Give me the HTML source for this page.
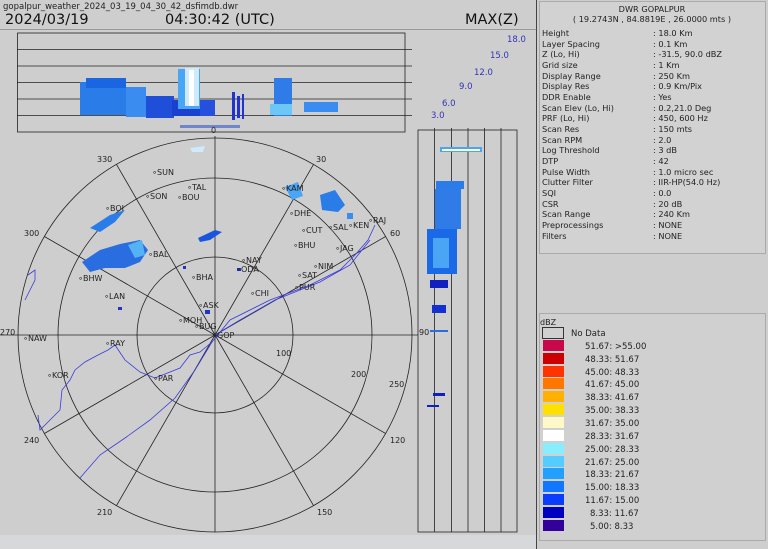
<!DOCTYPE html>
<html><head><style>
body{margin:0;width:768px;height:549px;overflow:hidden;background:#cdcdcd;font-family:"DejaVu Sans","Liberation Sans",sans-serif;}
svg{position:absolute;left:0;top:0}
</style></head><body>
<svg width="768" height="549" viewBox="0 0 768 549" xmlns="http://www.w3.org/2000/svg" font-family="DejaVu Sans, Liberation Sans, sans-serif">
<rect width="768" height="549" fill="#cecece"/>
<rect x="0" y="535" width="536" height="14" fill="#d6d8da"/>
<text x="3" y="9" font-size="8.5" fill="#222">gopalpur_weather_2024_03_19_04_30_42_dsfimdb.dwr</text>
<text x="5" y="24" font-size="14.5" fill="#111">2024/03/19</text>
<text x="165" y="24" font-size="14.5" fill="#111">04:30:42 (UTC)</text>
<text x="465" y="24" font-size="14.5" fill="#111">MAX(Z)</text>
<line x1="0" y1="29.5" x2="536" y2="29.5" stroke="#999"/>
<line x1="536.5" y1="0" x2="536.5" y2="549" stroke="#444"/>
<g stroke="#222" stroke-width="0.8" fill="none">
<rect x="17.5" y="33" width="387.5" height="99"/>
<line x1="17" y1="49.5" x2="412" y2="49.5"/><line x1="17" y1="66" x2="412" y2="66"/><line x1="17" y1="82.5" x2="412" y2="82.5"/><line x1="17" y1="99" x2="412" y2="99"/><line x1="17" y1="115.5" x2="412" y2="115.5"/>
<rect x="418" y="130" width="99" height="402"/>
<line x1="434.5" y1="128" x2="434.5" y2="532"/><line x1="451.5" y1="128" x2="451.5" y2="532"/><line x1="468" y1="128" x2="468" y2="532"/><line x1="484.5" y1="128" x2="484.5" y2="532"/><line x1="501" y1="128" x2="501" y2="532"/>
</g>
<g font-size="8.5" fill="#3333bb">
<text x="507" y="42">18.0</text><text x="490" y="58">15.0</text><text x="474" y="75">12.0</text><text x="459" y="89">9.0</text><text x="442" y="106">6.0</text><text x="431" y="118">3.0</text>
</g>
<g>
<rect x="80" y="82" width="46" height="33" fill="#2a7de8"/><rect x="86" y="78" width="40" height="10" fill="#1a66e0"/>
<rect x="126" y="87" width="20" height="30" fill="#3a8cf0"/><rect x="146" y="96" width="28" height="22" fill="#1f4fd8"/>
<rect x="172" y="100" width="42" height="16" fill="#1a40d0"/>
<rect x="178" y="69" width="22" height="40" fill="#4aa6f5"/><rect x="185" y="68" width="14" height="38" fill="#cfeafc"/><rect x="189" y="70" width="5" height="36" fill="#fff"/>
<rect x="200" y="100" width="15" height="16" fill="#2550dd"/>
<rect x="232" y="92" width="3" height="28" fill="#2233cc"/><rect x="237" y="96" width="3" height="22" fill="#2233cc"/><rect x="242" y="94" width="2" height="25" fill="#2233cc"/>
<rect x="274" y="78" width="18" height="38" fill="#2f7ce8"/><rect x="270" y="104" width="22" height="11" fill="#6cc6f6"/>
<rect x="304" y="102" width="34" height="10" fill="#3a8cf0"/>
<rect x="180" y="125" width="60" height="3" fill="#3355cc" opacity=".6"/>
</g>
<text x="211" y="133" font-size="8" fill="#222">0</text>
<g stroke="#222" stroke-width="0.8" fill="none">
<circle cx="215" cy="335" r="78"/><circle cx="215" cy="335" r="157"/><circle cx="215" cy="335" r="197"/>
<line x1="215" y1="136" x2="215" y2="532"/>
<line x1="0" y1="335" x2="418" y2="335"/>
<line x1="215" y1="335" x2="313.5" y2="164.4"/><line x1="215" y1="335" x2="385.6" y2="236.5"/>
<line x1="215" y1="335" x2="385.6" y2="433.5"/><line x1="215" y1="335" x2="313.5" y2="505.6"/>
<line x1="215" y1="335" x2="116.5" y2="505.6"/><line x1="215" y1="335" x2="44.4" y2="433.5"/>
<line x1="215" y1="335" x2="44.4" y2="236.5"/><line x1="215" y1="335" x2="116.5" y2="164.4"/>
</g>
<g font-size="8" fill="#222">
<text x="97" y="162">330</text><text x="316" y="162">30</text><text x="24" y="236">300</text><text x="390" y="236">60</text>
<text x="0" y="335">270</text><text x="419" y="335">90</text><text x="276" y="356">100</text><text x="351" y="377">200</text><text x="389" y="387">250</text>
<text x="24" y="443">240</text><text x="390" y="443">120</text><text x="97" y="515">210</text><text x="317" y="515">150</text>
</g>
<g stroke="#3b3bdd" stroke-width="0.8" fill="none">
<polyline points="80,478 100,455 125,438 150,420 175,398 195,370 212,342 230,320 270,300 310,285 340,270 355,255 368,240 375,225"/>
<polyline points="212,342 200,352 190,355 180,368 170,372 155,378 140,372 125,360 115,345 108,350 98,355 85,362 75,370 70,380 62,390 60,410 50,420 40,430 38,415"/>
<polyline points="215,335 240,320 275,300 320,282 350,265 370,240"/>
<polyline points="25,300 35,280 35,270 28,275"/>
</g>
<g>
<path d="M90,228 L110,215 125,210 115,222 100,232Z" fill="#2a7de8"/>
<path d="M82,262 L100,250 120,244 140,240 148,250 140,262 125,268 105,268 90,272Z" fill="#2a6de0"/>
<path d="M128,245 L142,240 145,255 135,258Z" fill="#55b3f5"/>
<path d="M198,238 L215,230 222,232 210,240 200,242Z" fill="#1a55e0"/>
<path d="M190,148 L205,146 203,152 192,152Z" fill="#cfeafc"/>
<path d="M285,187 L298,182 303,196 292,200Z" fill="#4aa6f5"/>
<path d="M320,195 L335,190 345,205 338,212 322,210Z" fill="#2a7de8"/>
<rect x="347" y="213" width="6" height="6" fill="#3a8cf0"/>
<rect x="183" y="266" width="3" height="3" fill="#2233cc"/><rect x="205" y="310" width="5" height="4" fill="#2233cc"/><rect x="118" y="307" width="4" height="3" fill="#2233cc"/><rect x="237" y="268" width="4" height="3" fill="#2233cc"/>
</g>
<g>
<rect x="440" y="147" width="42" height="5" fill="#4aa6f5"/><rect x="442" y="149" width="38" height="2" fill="#fffbd0"/>
<rect x="436" y="181" width="28" height="8" fill="#2a7de8"/><rect x="435" y="189" width="26" height="40" fill="#2f7ce8"/>
<rect x="427" y="229" width="30" height="45" fill="#1a6ae8"/><rect x="433" y="238" width="16" height="30" fill="#4aa6f5"/>
<rect x="430" y="280" width="18" height="8" fill="#1020c0"/><rect x="432" y="305" width="14" height="8" fill="#1530d0"/>
<rect x="430" y="330" width="18" height="2" fill="#2a6de0"/><rect x="433" y="393" width="12" height="3" fill="#1020c0"/><rect x="427" y="405" width="12" height="2" fill="#1020c0"/>
</g>
<g font-size="8" fill="#222">
<text x="152" y="175">∘SUN</text><text x="187" y="190">∘TAL</text><text x="145" y="199">∘SON</text><text x="177" y="200">∘BOU</text>
<text x="105" y="211">∘BOI</text><text x="148" y="257">∘BAL</text><text x="78" y="281">∘BHW</text><text x="104" y="299">∘LAN</text>
<text x="191" y="280">∘BHA</text><text x="198" y="308">∘ASK</text><text x="178" y="323">∘MOH</text><text x="194" y="329">∘BUG</text><text x="212" y="338">∘GOP</text>
<text x="241" y="263">∘NAY</text><text x="236" y="272">∘ODA</text><text x="250" y="296">∘CHI</text><text x="281" y="191">∘KAM</text>
<text x="289" y="216">∘DHE</text><text x="301" y="233">∘CUT</text><text x="328" y="230">∘SAL</text><text x="348" y="228">∘KEN</text><text x="368" y="223">∘RAJ</text>
<text x="293" y="248">∘BHU</text><text x="335" y="251">∘JAG</text><text x="313" y="269">∘NIM</text><text x="297" y="278">∘SAT</text><text x="294" y="290">∘PUR</text>
<text x="23" y="341">∘NAW</text><text x="105" y="346">∘RAY</text><text x="47" y="378">∘KOR</text><text x="153" y="381">∘PAR</text>
</g>
<rect x="539.5" y="1.5" width="226" height="252" fill="#d2d2d2" stroke="#aaa"/>
<g font-size="8.2" fill="#222">
<text x="652" y="12" text-anchor="middle">DWR GOPALPUR</text>
<text x="652" y="22" text-anchor="middle">( 19.2743N , 84.8819E , 26.0000 mts )</text>
</g>
<g font-size="8.2" fill="#222">
<text x="542" y="36">Height</text><text x="542" y="47">Layer Spacing</text><text x="542" y="57">Z (Lo, Hi)</text><text x="542" y="68">Grid size</text><text x="542" y="79">Display Range</text><text x="542" y="89">Display Res</text><text x="542" y="100">DDR Enable</text><text x="542" y="111">Scan Elev (Lo, Hi)</text><text x="542" y="121">PRF (Lo, Hi)</text><text x="542" y="132">Scan Res</text><text x="542" y="143">Scan RPM</text><text x="542" y="153">Log Threshold</text><text x="542" y="164">DTP</text><text x="542" y="175">Pulse Width</text><text x="542" y="185">Clutter Filter</text><text x="542" y="196">SQI</text><text x="542" y="207">CSR</text><text x="542" y="217">Scan Range</text><text x="542" y="228">Preprocessings</text><text x="542" y="239">Filters</text>
</g>
<g font-size="8.2" fill="#222">
<text x="653" y="36">:  18.0 Km</text><text x="653" y="47">:  0.1 Km</text><text x="653" y="57">:  -31.5, 90.0 dBZ</text><text x="653" y="68">:  1 Km</text><text x="653" y="79">:  250 Km</text><text x="653" y="89">:  0.9 Km/Pix</text><text x="653" y="100">:  Yes</text><text x="653" y="111">:  0.2,21.0 Deg</text><text x="653" y="121">:  450, 600 Hz</text><text x="653" y="132">:  150 mts</text><text x="653" y="143">:  2.0</text><text x="653" y="153">:  3 dB</text><text x="653" y="164">:  42</text><text x="653" y="175">:  1.0 micro sec</text><text x="653" y="185">:  IIR-HP(54.0 Hz)</text><text x="653" y="196">:  0.0</text><text x="653" y="207">:  20 dB</text><text x="653" y="217">:  240 Km</text><text x="653" y="228">:  NONE</text><text x="653" y="239">:  NONE</text>
</g>
<rect x="539.5" y="313.5" width="226" height="227" fill="#d0d0d0" stroke="#aaa"/>
<text x="540" y="325" font-size="8" fill="#222">dBZ</text>
<rect x="542.5" y="327.5" width="21" height="11" fill="#d0d0d0" stroke="#333"/>
<text x="571" y="336" font-size="8.5" fill="#222">No Data</text>
<g font-size="8.5" fill="#222">
<rect x="543" y="340" width="21" height="11" fill="#c8084a"/><text x="585" y="349">51.67: &gt;55.00</text>
<rect x="543" y="353" width="21" height="11" fill="#cc0000"/><text x="585" y="362">48.33: 51.67</text>
<rect x="543" y="366" width="21" height="11" fill="#ff3300"/><text x="585" y="375">45.00: 48.33</text>
<rect x="543" y="378" width="21" height="11" fill="#ff7700"/><text x="585" y="387">41.67: 45.00</text>
<rect x="543" y="391" width="21" height="11" fill="#ffb000"/><text x="585" y="400">38.33: 41.67</text>
<rect x="543" y="404" width="21" height="11" fill="#ffe000"/><text x="585" y="413">35.00: 38.33</text>
<rect x="543" y="417" width="21" height="11" fill="#fff8c8"/><text x="585" y="426">31.67: 35.00</text>
<rect x="543" y="430" width="21" height="11" fill="#ffffff"/><text x="585" y="439">28.33: 31.67</text>
<rect x="543" y="443" width="21" height="11" fill="#88eeff"/><text x="585" y="452">25.00: 28.33</text>
<rect x="543" y="456" width="21" height="11" fill="#55ccff"/><text x="585" y="465">21.67: 25.00</text>
<rect x="543" y="468" width="21" height="11" fill="#22a0ff"/><text x="585" y="477">18.33: 21.67</text>
<rect x="543" y="481" width="21" height="11" fill="#1177ff"/><text x="585" y="490">15.00: 18.33</text>
<rect x="543" y="494" width="21" height="11" fill="#0a3cff"/><text x="585" y="503">11.67: 15.00</text>
<rect x="543" y="507" width="21" height="11" fill="#0000c0"/><text x="590" y="516">8.33: 11.67</text>
<rect x="543" y="520" width="21" height="11" fill="#330099"/><text x="590" y="529">5.00:  8.33</text>
</g>
</svg>
</body></html>
